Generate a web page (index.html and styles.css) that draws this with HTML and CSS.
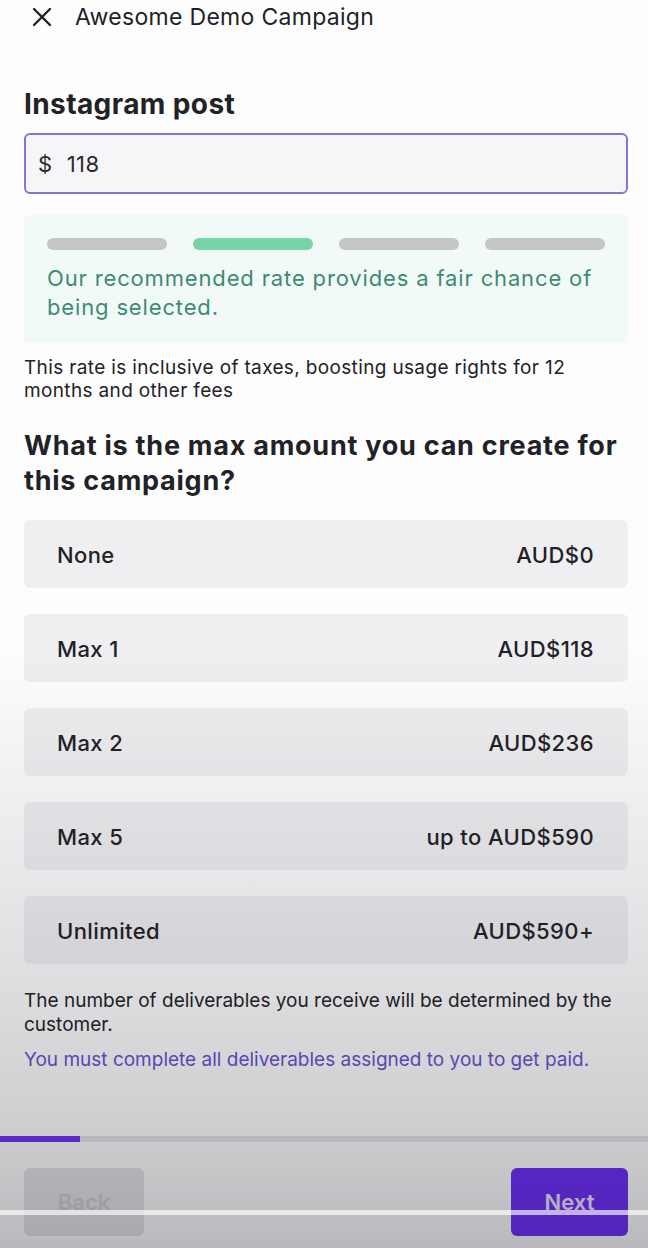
FILE: index.html
```html
<!DOCTYPE html>
<html lang="en">
<head>
<meta charset="utf-8">
<title>Awesome Demo Campaign</title>
<link rel="stylesheet" href="styles.css">
</head>
<body>
<div class="page">
  <header class="topbar">
    <svg class="close" width="20" height="20" viewBox="0 0 20 20" aria-hidden="true">
      <path d="M2 2 L18 18 M18 2 L2 18" stroke="#222226" stroke-width="2.4" stroke-linecap="round" fill="none"/>
    </svg>
    <span class="title">Awesome Demo Campaign</span>
  </header>

  <main class="content">
    <h1 class="section-title">Instagram post</h1>
    <div class="rate-input"><span class="currency">$</span><span class="value">118</span></div>

    <div class="recommend">
      <div class="bars">
        <span class="bar"></span>
        <span class="bar bar-on"></span>
        <span class="bar"></span>
        <span class="bar"></span>
      </div>
      <p class="recommend-text">Our recommended rate provides a fair chance of being selected.</p>
    </div>

    <p class="note first">This rate is inclusive of taxes, boosting usage rights for 12 months and other fees</p>

    <h2 class="question">What is the max amount you can create for this campaign?</h2>

    <ul class="options">
      <li class="option"><span>None</span><span>AUD$0</span></li>
      <li class="option"><span>Max 1</span><span>AUD$118</span></li>
      <li class="option"><span>Max 2</span><span>AUD$236</span></li>
      <li class="option"><span>Max 5</span><span>up to AUD$590</span></li>
      <li class="option"><span>Unlimited</span><span>AUD$590+</span></li>
    </ul>

    <p class="note foot">The number of deliverables you receive will be determined by the customer.</p>
    <p class="warn">You must complete all deliverables assigned to you to get paid.</p>
  </main>

  <div class="progress"><div class="progress-fill"></div></div>

  <footer class="actions">
    <button class="btn btn-back">Back</button>
    <button class="btn btn-next">Next</button>
  </footer>
</div>
<div class="shade"></div>
<div class="scrub"></div>
</body>
</html>
```

FILE: styles.css
```css
* { box-sizing: border-box; }

html, body {
  margin: 0;
  padding: 0;
  background: #fdfdfe;
}

body {
  font-family: Inter, "Noto Sans", "Liberation Sans", sans-serif;
  color: #222226;
  width: 648px;
  height: 1248px;
  overflow: hidden;
  position: relative;
}

.page {
  display: flex;
  flex-direction: column;
}

.topbar {
  display: flex;
  align-items: center;
  height: 34px;
  padding-left: 32px;
}

.close { flex: none; }

.title {
  margin-left: 23px;
  font-size: 23px;
  line-height: 34px;
  font-weight: 400;
  letter-spacing: 0.3px;
  color: #222226;
}

.content {
  padding: 0 20px 0 24px;
  display: flex;
  flex-direction: column;
}

.section-title {
  margin: 55px 0 0;
  font-size: 28px;
  line-height: 30px;
  font-weight: 700;
  letter-spacing: 0.4px;
}

.rate-input {
  margin-top: 14px;
  height: 61px;
  border: 2px solid #8a72d4;
  border-radius: 6px;
  background: #f6f5f8;
  display: flex;
  align-items: center;
  padding-left: 12px;
  font-size: 22px;
  letter-spacing: 0.5px;
  color: #2a2a2e;
  gap: 14px;
}

.recommend {
  margin-top: 21px;
  background: #f2faf7;
  border-radius: 4px;
  padding: 23px 23px 21px;
}

.bars {
  display: flex;
  gap: 26px;
}

.bar {
  flex: 1;
  height: 12px;
  border-radius: 6px;
  background: #c5c6c6;
}

.bar-on { background: #76d4a6; }

.recommend-text {
  margin: 14px 0 0;
  font-size: 22px;
  line-height: 29px;
  letter-spacing: 0.85px;
  color: #3d8b72;
}

.note {
  margin: 13px 0 0;
  font-size: 19px;
  line-height: 23px;
  color: #222226;
}

.note.first {
  letter-spacing: 0.35px;
}

.question {
  margin: 26px 0 0;
  font-size: 27px;
  line-height: 35px;
  font-weight: 700;
  letter-spacing: 0.75px;
}

.options {
  list-style: none;
  margin: 22px 0 0;
  padding: 0;
  display: flex;
  flex-direction: column;
  gap: 26px;
}

.option {
  height: 68px;
  border-radius: 6px;
  background: #efeef1;
  display: flex;
  justify-content: space-between;
  align-items: center;
  padding: 2px 34px 0 33px;
  font-size: 22px;
  font-weight: 500;
  letter-spacing: 0.4px;
  color: #222226;
}

.note.foot {
  margin-top: 25px;
  line-height: 24px;
}

.warn {
  margin: 11px 0 0;
  font-size: 19px;
  line-height: 24px;
  color: #6a4fd2;
}

.progress {
  margin-top: 64px;
  height: 6px;
  background: #e4e4e6;
}

.progress-fill {
  width: 80px;
  height: 100%;
  background: #6e30f4;
}

.actions {
  display: flex;
  justify-content: space-between;
  padding: 0 20px 0 24px;
  margin-top: 26px;
}

.btn {
  height: 68px;
  border: 0;
  border-radius: 6px;
  font-family: inherit;
  font-size: 22px;
  font-weight: 600;
}

.btn-back {
  width: 120px;
  background: #e4e4e6;
  color: #cdcdd0;
}

.btn-next {
  width: 117px;
  background: #6c2bf6;
  color: #ece4ff;
}

.shade {
  position: absolute;
  left: 0;
  top: 0;
  width: 648px;
  height: 1248px;
  pointer-events: none;
  background: linear-gradient(to bottom,
    rgba(20,20,30,0) 0%,
    rgba(20,20,30,0) 52%,
    rgba(20,20,30,0.05) 62%,
    rgba(20,20,30,0.13) 78%,
    rgba(20,20,30,0.2) 90%,
    rgba(20,20,30,0.29) 100%);
}

.scrub {
  position: absolute;
  left: 0;
  top: 1210px;
  width: 648px;
  height: 5px;
  background: rgba(255,255,255,0.65);
  pointer-events: none;
}
```
